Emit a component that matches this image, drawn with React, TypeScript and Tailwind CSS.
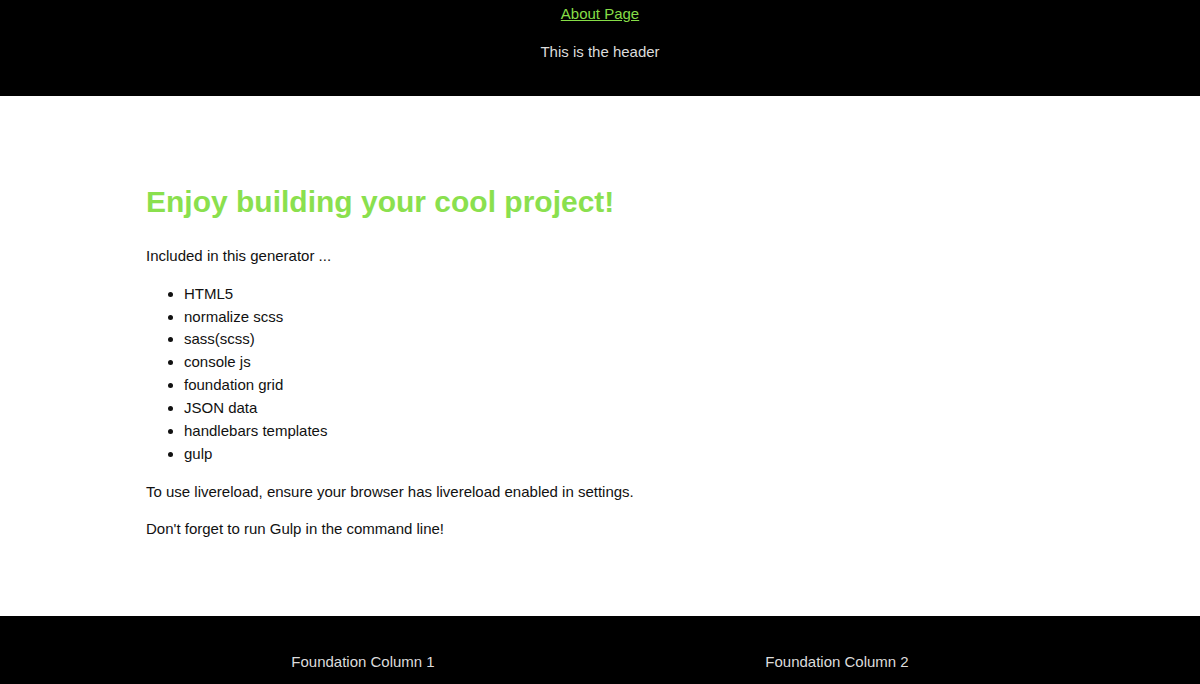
import React from 'react';

const tools = [
  'HTML5',
  'normalize scss',
  'sass(scss)',
  'console js',
  'foundation grid',
  'JSON data',
  'handlebars templates',
  'gulp',
];

const App = () => {
  return (
    <div className="min-h-screen bg-white font-['Liberation_Sans',Arial,sans-serif] text-[15px] leading-[22.7px] text-[#111]">
      {/* Header */}
      <header className="bg-black h-[96px] flex flex-col items-center pt-[3px] gap-[15px]">
        <a href="#" className="text-[#86dd47] underline">About Page</a>
        <p className="text-[#dcdcdc]">This is the header</p>
      </header>

      {/* Content */}
      <main className="max-w-[948px] mx-auto px-[20px] pt-[88px] pb-[75px]">
        <h1 className="text-[30px] leading-[36px] font-bold text-[#8ae04e] mb-[25px]">
          Enjoy building your cool project!
        </h1>
        <p className="mb-[15px]">Included in this generator ...</p>
        <ul className="list-disc pl-[38px] mb-[16px] leading-[22.85px]">
          {tools.map(t => (
            <li key={t}>{t}</li>
          ))}
        </ul>
        <p className="mb-[14px]">To use livereload, ensure your browser has livereload enabled in settings.</p>
        <p>Don't forget to run Gulp in the command line!</p>
      </main>

      {/* Footer */}
      <footer className="bg-black pt-[35px] pb-[40px]">
        <div className="max-w-[948px] mx-auto grid grid-cols-2 text-[#dcdcdc] text-center">
          <div>Foundation Column 1</div>
          <div>Foundation Column 2</div>
        </div>
      </footer>
    </div>
  );
};

export default App;
